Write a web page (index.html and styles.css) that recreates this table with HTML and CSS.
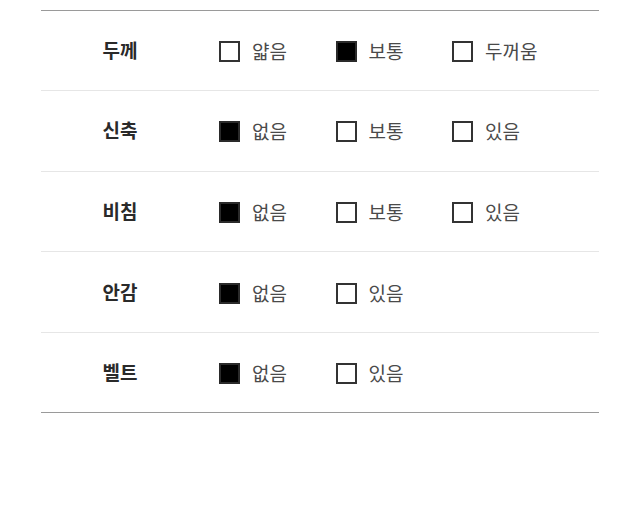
FILE: index.html
```html
<!DOCTYPE html>
<html lang="ko">
<head>
<meta charset="utf-8">
<link rel="stylesheet" href="styles.css">
</head>
<body>
<div class="table">
  <div class="row">
    <div class="label">두께</div>
    <div class="opts">
      <span class="opt"><span class="box"></span>얇음</span>
      <span class="opt"><span class="box on"></span>보통</span>
      <span class="opt"><span class="box"></span>두꺼움</span>
    </div>
  </div>
  <div class="row">
    <div class="label">신축</div>
    <div class="opts">
      <span class="opt"><span class="box on"></span>없음</span>
      <span class="opt"><span class="box"></span>보통</span>
      <span class="opt"><span class="box"></span>있음</span>
    </div>
  </div>
  <div class="row">
    <div class="label">비침</div>
    <div class="opts">
      <span class="opt"><span class="box on"></span>없음</span>
      <span class="opt"><span class="box"></span>보통</span>
      <span class="opt"><span class="box"></span>있음</span>
    </div>
  </div>
  <div class="row">
    <div class="label">안감</div>
    <div class="opts">
      <span class="opt"><span class="box on"></span>없음</span>
      <span class="opt"><span class="box"></span>있음</span>
    </div>
  </div>
  <div class="row">
    <div class="label">벨트</div>
    <div class="opts">
      <span class="opt"><span class="box on"></span>없음</span>
      <span class="opt"><span class="box"></span>있음</span>
    </div>
  </div>
</div>
</body>
</html>
```
FILE: styles.css
```css
html, body {
  margin: 0;
  padding: 0;
  background: #fff;
}
body {
  font-family: "Noto Sans CJK KR", "Noto Sans", sans-serif;
  color: #333;
  padding-top: 9.5px;
}
.table {
  margin: 0 41px;
  border-top: 1px solid #9a9a9a;
  border-bottom: 1px solid #9a9a9a;
}
.row {
  display: flex;
  align-items: center;
  height: 79.6px;
  border-top: 1px solid #e6e6e6;
}
.row:first-child {
  border-top: none;
}
.label {
  width: 158px;
  text-align: center;
  font-weight: 700;
  font-size: 19px;
  color: #2a2a2a;
  line-height: 1;
  margin-top: -2px;
}
.opts {
  display: flex;
  padding-left: 20px;
}
.opt {
  display: flex;
  align-items: center;
  width: 116.5px;
  font-size: 19px;
  line-height: 1;
  color: #4a4a4a;
}
.opt-text {
  display: block;
}
.box {
  box-sizing: border-box;
  width: 21px;
  height: 21px;
  border: 2px solid #333;
  margin-right: 12px;
  margin-top: 2px;
  background: #fff;
}
.box.on {
  background: #000;
  border-color: #2a2a2a;
}
```
